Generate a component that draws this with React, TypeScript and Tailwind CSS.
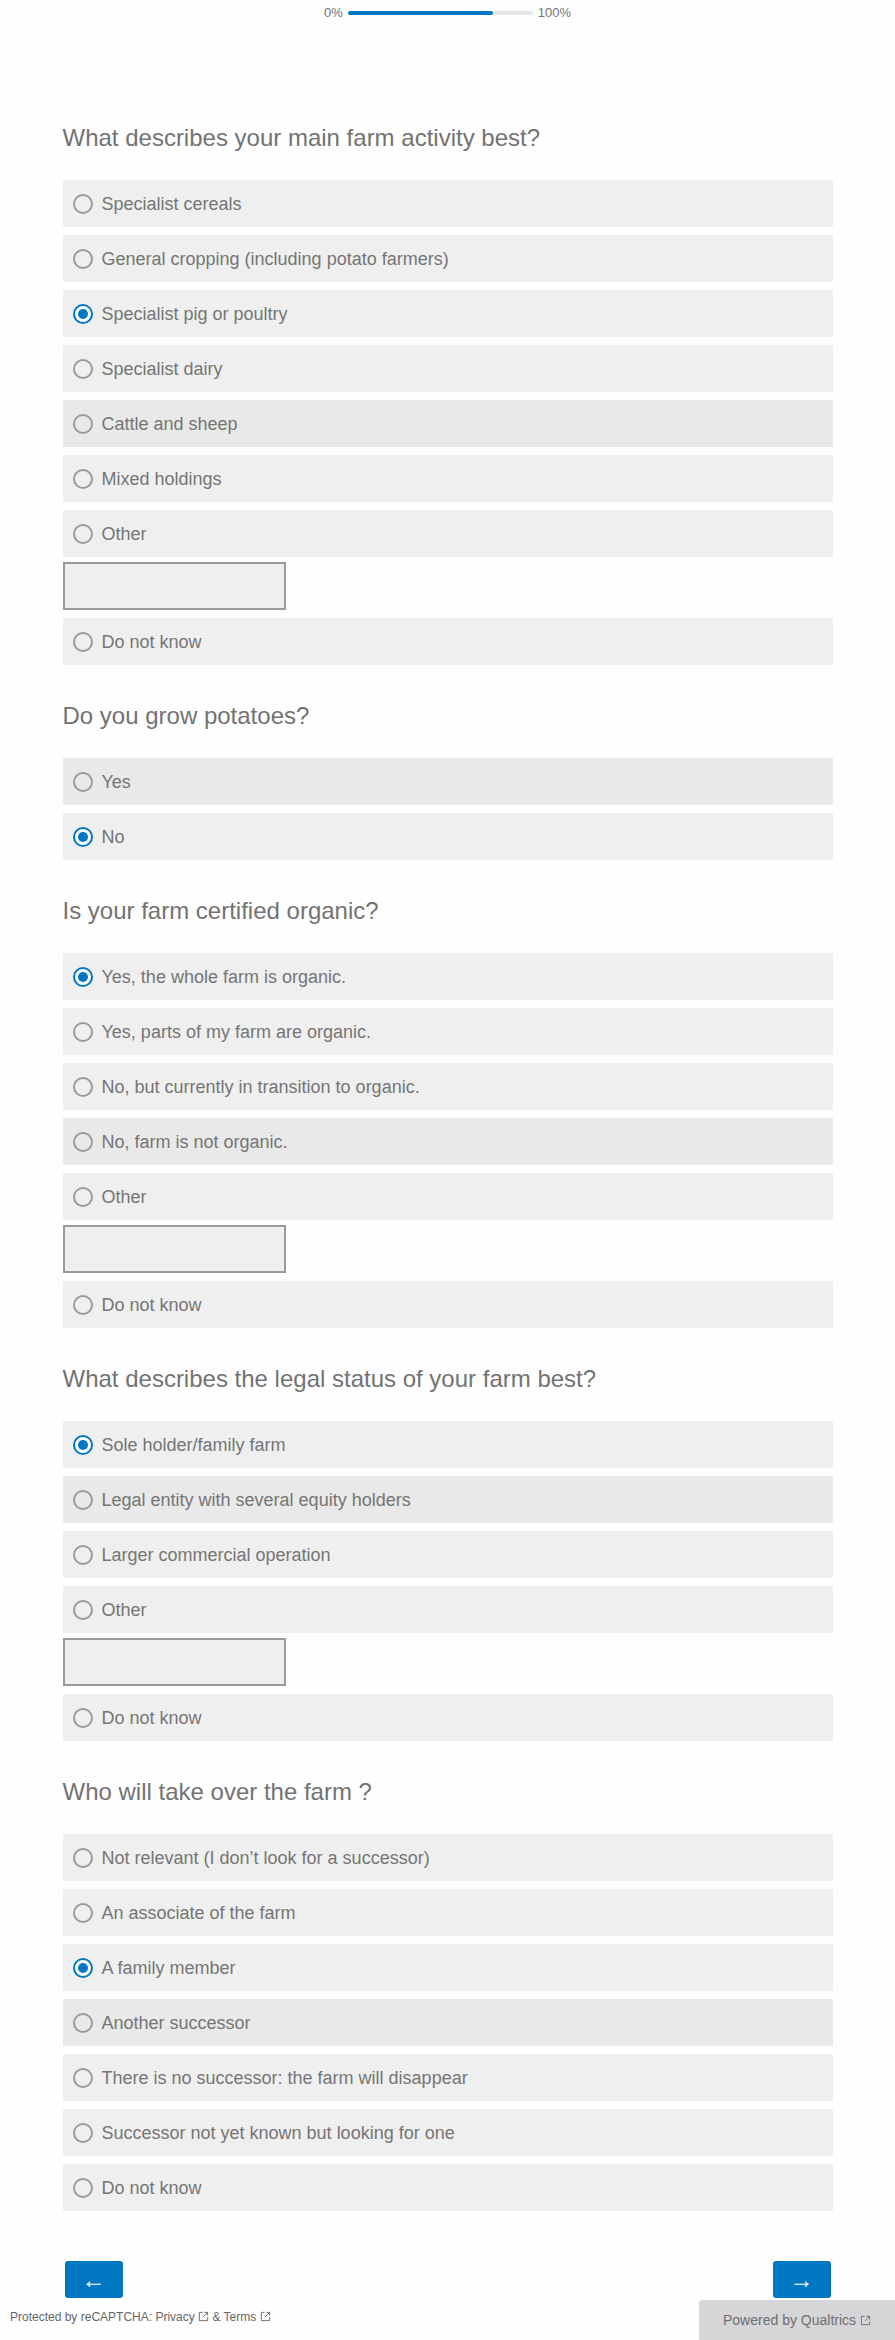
import React from "react";

type Opt = { label: string; selected?: boolean; dark?: boolean; input?: boolean };
type Q = { title: string; options: Opt[] };

const questions: Q[] = [
  {
    title: "What describes your main farm activity best?",
    options: [
      { label: "Specialist cereals" },
      { label: "General cropping (including potato farmers)" },
      { label: "Specialist pig or poultry", selected: true },
      { label: "Specialist dairy" },
      { label: "Cattle and sheep", dark: true },
      { label: "Mixed holdings" },
      { label: "Other", input: true },
      { label: "Do not know" },
    ],
  },
  {
    title: "Do you grow potatoes?",
    options: [{ label: "Yes", dark: true }, { label: "No", selected: true }],
  },
  {
    title: "Is your farm certified organic?",
    options: [
      { label: "Yes, the whole farm is organic.", selected: true },
      { label: "Yes, parts of my farm are organic." },
      { label: "No, but currently in transition to organic." },
      { label: "No, farm is not organic.", dark: true },
      { label: "Other", input: true },
      { label: "Do not know" },
    ],
  },
  {
    title: "What describes the legal status of your farm best?",
    options: [
      { label: "Sole holder/family farm", selected: true },
      { label: "Legal entity with several equity holders", dark: true },
      { label: "Larger commercial operation" },
      { label: "Other", input: true },
      { label: "Do not know" },
    ],
  },
  {
    title: "Who will take over the farm ?",
    options: [
      { label: "Not relevant (I don\u2019t look for a successor)" },
      { label: "An associate of the farm" },
      { label: "A family member", selected: true },
      { label: "Another successor", dark: true },
      { label: "There is no successor: the farm will disappear" },
      { label: "Successor not yet known but looking for one" },
      { label: "Do not know" },
    ],
  },
];

function Radio({ selected }: { selected?: boolean }) {
  if (selected) {
    return (
      <span className="flex h-[20px] w-[20px] shrink-0 items-center justify-center rounded-full border-[2.5px] border-[#0077c2] bg-white">
        <span className="h-[10px] w-[10px] rounded-full bg-[#0077c2]" />
      </span>
    );
  }
  return <span className="h-[20px] w-[20px] shrink-0 rounded-full border-2 border-[#9a9a9a]" />;
}

function Row({ opt }: { opt: Opt }) {
  return (
    <div>
      <div
        className={
          "flex h-[47px] items-center gap-[9px] pl-[10px] " +
          (opt.dark ? "bg-[#e9e9e9]" : "bg-[#efefef]")
        }
      >
        <Radio selected={opt.selected} />
        <span className="text-[18px] leading-[22px] text-[#757575]">{opt.label}</span>
      </div>
      {opt.input && (
        <div className="mt-[5px] h-[48px] w-[223px] border-2 border-[#9a9a9a] bg-[#efefef]" />
      )}
    </div>
  );
}

function ExtIcon() {
  return (
    <svg width="11" height="11" viewBox="0 0 12 12" className="inline-block align-[-1px]" fill="none" stroke="currentColor" strokeWidth="1">
      <path d="M5 1.5H1.5v9h9V7" />
      <path d="M7 1.5h3.5V5M10.5 1.5L5.5 6.5" />
    </svg>
  );
}

export default function App() {
  return (
    <div
      className="relative min-h-[2340px] bg-[#fefefe]"
      style={{ fontFamily: '"Liberation Sans", Arial, Helvetica, sans-serif' }}
    >
      {/* progress */}
      <div className="flex items-center justify-center gap-[5px] pt-[5px] text-[13px] leading-[16px] text-[#757575]">
        <span>0%</span>
        <div className="h-[4px] w-[185px] rounded-full bg-[#e6e6e8]">
          <div className="h-[4px] w-[145px] rounded-full bg-[#0077c2]" />
        </div>
        <span>100%</span>
      </div>

      <div className="mx-auto w-[770px] pt-[103px]">
        {questions.map((q, qi) => (
          <div key={qi} className={qi > 0 ? "mt-[37px]" : ""}>
            <h2 className="mb-[28px] text-[24px] leading-[28px] font-normal text-[#737373]">{q.title}</h2>
            <div className="flex flex-col gap-[8px]">
              {q.options.map((o, oi) => (
                <Row key={oi} opt={o} />
              ))}
            </div>
          </div>
        ))}

        <div className="mt-[50px] flex justify-between px-[2px]">
          <button className="flex h-[37px] w-[58px] items-center justify-center rounded-[3px] bg-[#0077c2] text-[24px] leading-none text-white">
            ←
          </button>
          <button className="flex h-[37px] w-[58px] items-center justify-center rounded-[3px] bg-[#0077c2] text-[24px] leading-none text-white">
            →
          </button>
        </div>
      </div>

      <div className="mt-[2px] flex items-end justify-between">
        <div className="mb-[16px] pl-[10px] text-[12px] leading-[14px] text-[#666]">
          Protected by reCAPTCHA: Privacy <ExtIcon /> &amp; Terms <ExtIcon />
        </div>
        <div className="flex h-[40px] w-[196px] items-center rounded-tl-[3px] bg-[#d6d6d8] pl-[24px] text-[14px] text-[#6e6e6e]">
          Powered by Qualtrics&nbsp;
          <ExtIcon />
        </div>
      </div>
    </div>
  );
}
